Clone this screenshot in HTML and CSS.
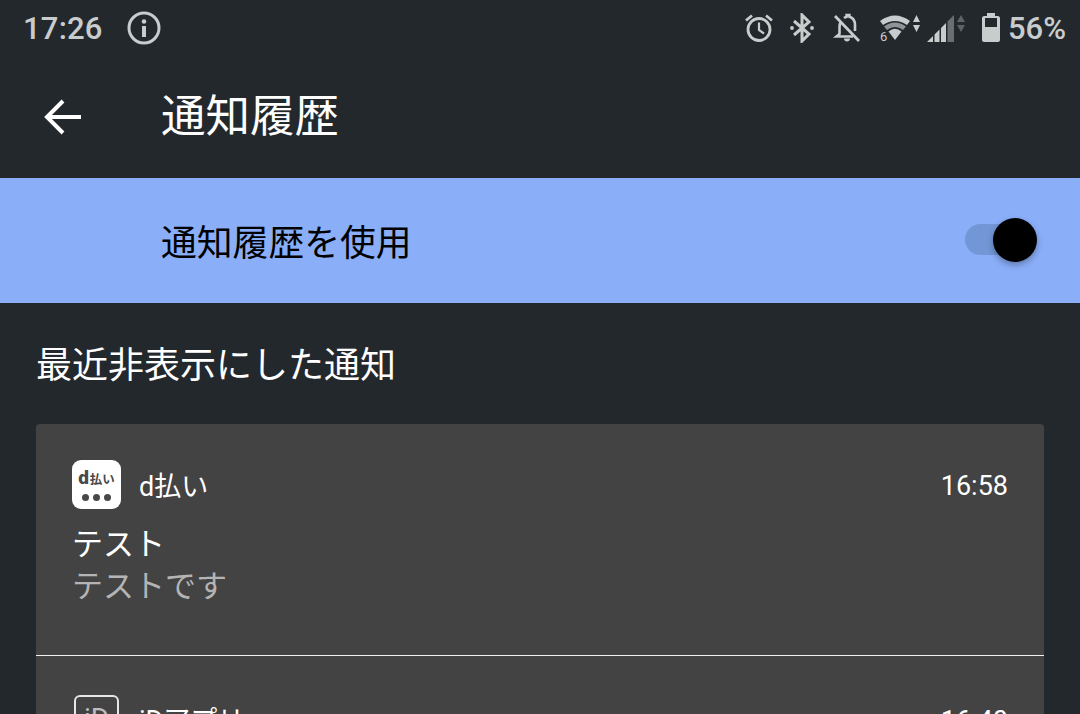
FILE: index.html
```html
<!doctype html>
<html lang="ja">
<head>
  <meta charset="utf-8">
  <meta name="viewport" content="width=device-width, initial-scale=1.0">
  <title>通知履歴</title>
  <link rel="stylesheet" href="styles.css">
</head>
<body>
  <div class="status-bar">
    <div class="status-left">
      <span class="clock">17:26</span>
      <svg class="info-icon" viewBox="0 0 34 34" width="34" height="34">
        <circle cx="17" cy="17" r="15" fill="none" stroke="#c9cccd" stroke-width="3"/>
        <rect x="15" y="15" width="4" height="11" fill="#c9cccd"/>
        <circle cx="17" cy="10.5" r="2.3" fill="#c9cccd"/>
      </svg>
    </div>
    <div class="status-right">
      <svg class="alarm" viewBox="0 0 30 30" width="30" height="30">
        <circle cx="15" cy="16.5" r="11" fill="none" stroke="#c9cccd" stroke-width="2.8"/>
        <path d="M15 9.5V17l5 3.5" fill="none" stroke="#c9cccd" stroke-width="2.2"/>
        <path d="M2 7.500 8 2.500M28 7.500 22 2.500" fill="none" stroke="#c9cccd" stroke-width="2.8"/>
      </svg>
      <svg class="bluetooth" viewBox="0 0 26 30" width="26" height="30">
        <path d="M5 8 20 21 13 28V2l7 7L5 22" fill="none" stroke="#c9cccd" stroke-width="3"/>
        <circle cx="3" cy="15" r="1.9" fill="#c9cccd"/>
        <circle cx="23" cy="15" r="1.9" fill="#c9cccd"/>
      </svg>
      <svg class="bell-off" viewBox="0 0 30 30" width="30" height="30">
        <path d="M9 8.500C8 10 7.500 12 7.500 14v7L4.500 23.500H21M12 5c.8-.6 1.700-1 2.600-1.300V2h2.800v1.700C21 4.800 23 8 23 12v6" fill="none" stroke="#c9cccd" stroke-width="2.6"/>
        <path d="M12 25.500h6c0 1.700-1.300 3-3 3s-3-1.300-3-3z" fill="#c9cccd"/>
        <path d="M3 3 27 28" stroke="#c9cccd" stroke-width="2.8"/>
      </svg>
      <svg class="wifi" viewBox="0 -5 42 40" width="42" height="40">
        <path d="M0 8Q15-3 30 8L27 12Q15 4 3 12z" fill="#c9cccd"/>
        <path d="M4 13.500Q15 5.500 26 13.500L23 17Q15 11 7 17z" fill="#8f9395"/>
        <path d="M8.500 18.500Q15 13 21.500 18.500L15 27z" fill="#c9cccd"/>
        <path d="M33 9 36.500 2 40 9zM33 12h7l-3.500 7z" fill="#c9cccd"/>
        <text class="wifi-gen" x="0" y="28">6</text>
      </svg>
      <svg class="signal" viewBox="0 0 40 30" width="40" height="30">
        <path d="M1 29 7 23v6zM8.500 29V21.500l5-5V29zM15 29V15l5-5v19z" fill="#c9cccd"/>
        <path d="M21.500 29V8.500L28 2v27z" fill="#6a6e71"/>
        <path d="M31 9 35 2l4 7zM31 12h8l-4 7z" fill="#5f6366"/>
      </svg>
      <svg class="battery" viewBox="0 0 18 30" width="18" height="30">
        <path d="M5 0h8v3h3c1 0 2 1 2 2v22c0 1-1 2-2 2H2c-1 0-2-1-2-2V5c0-1 1-2 2-2h3z" fill="#c9cccd"/>
        <rect x="3" y="5" width="12" height="9" fill="#23282d"/>
      </svg>
      <span class="battery-level">56%</span>
    </div>
  </div>

  <header class="toolbar">
    <svg class="back-icon" viewBox="0 0 38 36" width="38" height="36">
      <path d="M37 18H4M19 2 3 18l16 16" fill="none" stroke="#fff" stroke-width="4"/>
    </svg>
    <h1>通知履歴</h1>
  </header>

  <div class="main-switch">
    <span class="switch-label">通知履歴を使用</span>
    <div class="switch">
      <div class="switch-track"></div>
      <div class="switch-thumb"></div>
    </div>
  </div>

  <h2 class="section-title">最近非表示にした通知</h2>

  <div class="card">
    <div class="notif">
      <div class="notif-head">
        <div class="app-icon">
          <div class="app-icon-name"><b>d</b>払い</div>
          <div class="app-icon-dots"><i></i><i></i><i></i></div>
        </div>
        <span class="app-name">d払い</span>
        <span class="notif-time">16:58</span>
      </div>
      <div class="notif-title">テスト</div>
      <div class="notif-text">テストです</div>
    </div>
    <div class="notif notif-second">
      <div class="notif-head">
        <div class="app-icon-outline">iD</div>
        <span class="app-name">iDアプリ</span>
        <span class="notif-time">16:40</span>
      </div>
    </div>
  </div>
</body>
</html>
```

FILE: styles.css
```css
* {
  margin: 0;
  padding: 0;
  box-sizing: border-box;
}

html, body {
  height: 714px;
  overflow: hidden;
}

body {
  background-color: #23282d;
  color: #fff;
  font-family: Roboto, "Noto Sans CJK JP", sans-serif;
}

.status-bar {
  height: 56px;
  display: flex;
  justify-content: space-between;
  align-items: center;
  padding: 0 14px 0 24px;
  color: #c9cccd;
}

.status-left {
  display: flex;
  align-items: center;
  gap: 24px;
}

.clock {
  font-size: 31px;
  font-weight: 500;
  margin-left: -1px;
  letter-spacing: 0.2px;
}

.status-right {
  display: flex;
  align-items: center;
}

.bluetooth {
  margin-left: 15px;
}

.bell-off {
  margin-left: 17px;
}

.wifi {
  margin-left: 18px;
}

.signal {
  margin-left: 4px;
}

.battery {
  margin-left: 16px;
}

.battery-level {
  font-size: 31px;
  font-weight: 500;
  margin-left: 8px;
}

.wifi-gen {
  font-size: 13px;
  fill: #c9cccd;
  font-family: Roboto, sans-serif;
}

.toolbar {
  height: 122px;
  display: flex;
  align-items: center;
  padding: 0 0 0 44px;
}

.back-icon {
  margin-right: 79px;
}

.toolbar h1 {
  font-size: 44.500px;
  font-weight: 400;
  line-height: 1;
}

.main-switch {
  height: 125px;
  background-color: #8aaef8;
  display: flex;
  justify-content: space-between;
  align-items: center;
  padding: 0 43px 0 161px;
  color: #000;
}

.switch-label {
  font-size: 35.800px;
  margin-top: -2px;
}

.switch {
  position: relative;
  width: 72px;
  height: 44px;
  margin-top: -1px;
}

.switch-track {
  position: absolute;
  left: 0;
  top: 6px;
  width: 66px;
  height: 31px;
  border-radius: 15.500px;
  background-color: #7396d6;
}

.switch-thumb {
  position: absolute;
  right: 0;
  top: 0;
  width: 44px;
  height: 44px;
  border-radius: 50%;
  background-color: #000;
  box-shadow: 0 3px 6px rgba(0, 0, 0, 0.3);
}

.section-title {
  font-size: 36px;
  font-weight: 400;
  line-height: 1;
  padding: 45px 0 40px 36px;
}

.card {
  margin: 0 36px;
  background-color: #434343;
  border-radius: 4px 4px 0 0;
  height: 400px;
}

.notif {
  height: 232px;
  padding: 36px 36px 0;
  border-bottom: 1px solid #f0f0f0;
}

.notif-second {
  border-bottom: none;
  padding-top: 39px;
}

.notif-head {
  display: flex;
  align-items: center;
  height: 49px;
}

.app-icon {
  width: 49px;
  height: 49px;
  background-color: #fff;
  border-radius: 9px;
  color: #484848;
  display: flex;
  flex-direction: column;
  align-items: center;
  padding-top: 8px;
}

.app-icon-name {
  font-size: 12.500px;
  font-weight: 700;
  line-height: 20px;
  white-space: nowrap;
}

.app-icon-name b {
  font-size: 19px;
  font-weight: 900;
  line-height: 20px;
  margin-right: 1px;
}

.app-icon-dots {
  display: flex;
  gap: 4px;
  margin-top: 4px;
}

.app-icon-dots i {
  width: 7px;
  height: 7px;
  border-radius: 50%;
  background-color: #484848;
}

.app-icon-outline {
  width: 45px;
  height: 49px;
  margin: 0 2px;
  border: 2px solid #e6e6e6;
  border-radius: 6px;
  color: #bdbdbd;
  font-size: 28px;
  line-height: 44px;
  text-align: center;
  flex-shrink: 0;
}

.app-name {
  font-size: 27px;
  margin-left: 18px;
}

.notif-second .app-name {
  margin-top: -3px;
}

.notif-time {
  font-size: 27px;
  margin-left: auto;
  padding-top: 3px;
}

.notif-title {
  font-size: 31px;
  line-height: 40px;
  margin-top: 16px;
}

.notif-text {
  font-size: 31px;
  line-height: 42px;
  padding-top: 1px;
  color: #b4b4b4;
}
```
